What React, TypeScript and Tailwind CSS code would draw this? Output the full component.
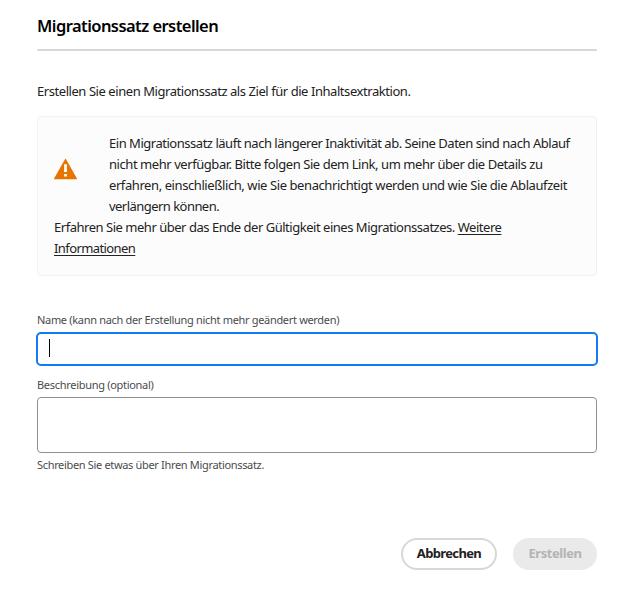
export default function App() {
  return (
    <main className="flex h-[592px] w-[634px] flex-col bg-white px-[37px] pt-[14px] font-['Noto_Sans',sans-serif] text-[13px] leading-[21px] tracking-[-0.44px] whitespace-nowrap text-[#222]">
      <h1 className="h-[35px] text-[16.5px] leading-6 font-semibold tracking-[-0.56px] text-black">Migrationssatz erstellen</h1>
      <div className="h-[2px] shrink-0 rounded-[1px] bg-[#d8d8d8]" />
      <p className="mt-[30px] h-[35px]">Erstellen Sie einen Migrationssatz als Ziel für die Inhaltsextraktion.</p>

      <section className="h-[160px] rounded-[4px] border border-[#f1f1f1] bg-[#fcfcfc] px-4 pt-4">
        <div className="flex">
          <svg className="mt-[25px] mr-8 h-[22px] w-[23px] shrink-0" viewBox="0 0 23 22" fill="none">
            <path d="M11.1 1a.5.5 0 0 1 .8 0L22.9 20.4a.5.5 0 0 1-.4.8H.5a.5.5 0 0 1-.4-.8Z" fill="#e87400" />
            <path d="M10.1 6.3h2.8v7.7h-2.8ZM10.1 16h2.8v2.6h-2.8Z" fill="#fff" />
          </svg>
          <div>
            <p className="tracking-[-0.475px]">Ein Migrationssatz läuft nach längerer Inaktivität ab. Seine Daten sind nach Ablauf</p>
            <p>nicht mehr verfügbar. Bitte folgen Sie dem Link, um mehr über die Details zu</p>
            <p className="tracking-[-0.415px]">erfahren, einschließlich, wie Sie benachrichtigt werden und wie Sie die Ablaufzeit</p>
            <p className="tracking-[-0.54px]">verlängern können.</p>
          </div>
        </div>
        <p className="tracking-[-0.475px]">Erfahren Sie mehr über das Ende der Gültigkeit eines Migrationssatzes. <a className="underline underline-offset-2">Weitere</a></p>
        <p><a className="tracking-[-0.59px] underline underline-offset-2">Informationen</a></p>
      </section>

      <label className="mt-[36px] h-[20px] text-[11px] leading-4 tracking-[-0.32px] text-[#4b4b4b]">Name (kann nach der Erstellung nicht mehr geändert werden)</label>
      <div className="-mx-px h-[34px] rounded-[5px] border-2 border-[#147af3] pt-[5px] pl-[11px]">
        <div className="h-[18px] w-px bg-black" />
      </div>
      <label className="mt-[11px] h-[20px] text-[11px] leading-4 tracking-[-0.3px] text-[#4b4b4b]">Beschreibung (optional)</label>
      <div className="h-[56px] shrink-0 rounded-[4px] border border-[#909090]" />
      <p className="mt-1 text-[11px] leading-4 tracking-[-0.33px] text-[#4b4b4b]">Schreiben Sie etwas über Ihren Migrationssatz.</p>

      <footer className="mt-[65px] flex justify-end gap-4 text-[13px] font-bold">
        <button className="h-8 w-[96px] rounded-full border-2 border-[#d8d8d8] pb-0.5 tracking-[-0.65px]">Abbrechen</button>
        <button className="h-8 w-[84px] rounded-full bg-[#eaeaea] pb-0.5 text-[#b4b4b4]">Erstellen</button>
      </footer>
    </main>
  );
}
